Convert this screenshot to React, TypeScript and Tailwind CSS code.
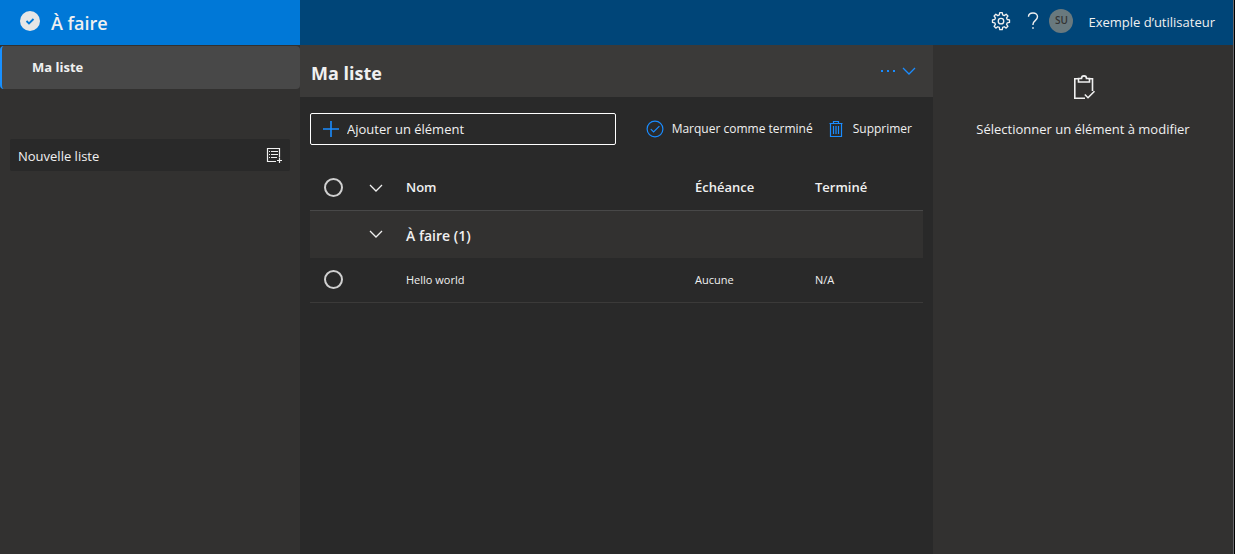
import type { ReactNode } from "react";

const tasks = [{ name: "Hello world", due: "Aucune", done: "N/A" }];

function Chevron({ className }: { className?: string }) {
  return (
    <svg viewBox="0 0 14 14" className={className} fill="none" stroke="currentColor" strokeWidth="1.3">
      <path d="M1 4l6 6 6-6" />
    </svg>
  );
}

function GearIcon() {
  return (
    <svg viewBox="0 0 24 24" className="size-5" fill="none" stroke="currentColor" strokeWidth="1.6" strokeLinejoin="round">
      <path d="M10.5 2h3l.5 2.7 1.9.8 2.3-1.6 2.1 2.100-1.600 2.300.8 1.900 2.700.5v3l-2.700.5-.8 1.900 1.600 2.300-2.100 2.100-2.300-1.600-1.900.8-.5 2.700h-3l-.5-2.700-1.900-.8-2.300 1.600-2.100-2.100 1.600-2.300-.8-1.900-2.700-.5v-3l2.700-.5.8-1.900L3.700 6l2.100-2.100 2.300 1.600 1.900-.8z" />
      <circle cx="12" cy="12.200" r="3.300" />
    </svg>
  );
}

function HelpIcon() {
  return (
    <svg viewBox="0 0 12 18" className="h-[18px] w-3" fill="none" stroke="currentColor" strokeWidth="1.4">
      <path d="M1.500 4.800C1.500 2.500 3.300 1 6 1s4.500 1.500 4.500 3.800c0 3.700-4.500 3.900-4.500 7.400v.8" />
      <path d="M6 15.200v1.600" strokeWidth="1.600" />
    </svg>
  );
}

function NewListIcon() {
  return (
    <svg viewBox="0 0 16 16" className="size-4" fill="none" stroke="currentColor" strokeWidth="1.2">
      <path d="M10 14.500H1.500v-13h12v9" />
      <path d="M3 4.500h1M3 7.500h1M3 10.500h1M5 4.500h7M5 7.500h7M5 10.500h6" strokeWidth="1" />
      <path d="M13.500 11v5M11 13.500h5" />
    </svg>
  );
}

function ClipboardIcon() {
  return (
    <svg viewBox="0 0 24 26" className="ml-0.5 h-[26px] w-6" fill="none" stroke="currentColor" strokeWidth="1.6">
      <path d="M13 24.200H2.800V4.800H7M16.500 4.800h4V17" />
      <path d="M6.500 8V4.500h3c0-3.500 5-3.500 5 0h3V8z" />
      <path d="M12.800 20.500l3.200 3.200 6.500-6.500" />
    </svg>
  );
}

function CheckIcon() {
  return (
    <svg viewBox="0 0 18 18" className="size-[18px]" fill="none" stroke="currentColor" strokeWidth="1.2">
      <circle cx="9" cy="9" r="7.900" />
      <path d="M4.800 9.200l2.800 2.800 5.800-5.800" />
    </svg>
  );
}

function TrashIcon() {
  return (
    <svg viewBox="0 0 18 18" className="size-[18px]" fill="none" stroke="currentColor" strokeWidth="1.2">
      <path d="M2.500 3.500h13M6.500 3.500v-2h5v2M3.500 3.500v13h11v-13" />
      <path d="M6.500 6v8M9 6v8M11.500 6v8" />
    </svg>
  );
}

function CommandButton({ icon, children }: { icon: ReactNode; children: ReactNode }) {
  return (
    <button className="flex items-center gap-2 whitespace-nowrap text-xs">
      <span className="text-[#1a8cff]">{icon}</span>
      {children}
    </button>
  );
}

function RoundCheckbox({ label }: { label: string }) {
  return (
    <input
      type="checkbox"
      aria-label={label}
      className="ml-3.5 block size-[19px] appearance-none rounded-full border-2 border-[#d0d0d0] checked:bg-[#1a8cff]"
    />
  );
}

export default function App() {
  return (
    <div className="min-h-screen bg-black pr-px font-['Open_Sans','Noto_Sans',sans-serif] text-[13px] text-[#f0f0f0]">
      <div className="flex min-h-screen flex-col border-r border-[#66666a] bg-[#292929]">
        <header className="flex h-[45px] bg-[#004578]">
          <div className="flex w-[300px] shrink-0 items-center gap-[11px] bg-[#0078d7] pb-1 pl-5">
            <svg viewBox="0 0 20 20" className="size-5">
              <circle cx="10" cy="10" r="10" fill="#e6e6e6" />
              <path d="M6.500 10l2.500 2.500 4.500-4.500" fill="none" stroke="#0078d7" strokeWidth="1.800" />
            </svg>
            <h1 className="pt-1 text-lg font-semibold">À faire</h1>
          </div>
          <div className="flex flex-1 items-center justify-end pr-[18px] pb-1">
            <button aria-label="Paramètres" className="mr-4">
              <GearIcon />
            </button>
            <button aria-label="Aide" className="mr-2.5">
              <HelpIcon />
            </button>
            <span className="mr-[15px] flex size-6 items-center justify-center rounded-full bg-[#69797e] text-[10px] font-semibold text-[#333]">
              SU
            </span>
            <span className="pt-1">Exemple d’utilisateur</span>
          </div>
        </header>

        <div className="flex flex-1">
          <nav className="w-[300px] shrink-0 bg-[#323130]">
            <a
              href="#"
              className="mt-px flex h-[43px] items-center rounded-sm border-l-2 border-[#1890ff] bg-[#484848] pl-[30px] font-bold"
            >
              Ma liste
            </a>
            <button className="mx-2.5 mt-[50px] flex h-8 w-[280px] items-center justify-between rounded-xs bg-[#292929] px-2">
              <span className="pt-1">Nouvelle liste</span>
              <NewListIcon />
            </button>
          </nav>

          <main className="min-w-0 flex-1">
            <div className="flex h-[52px] items-center justify-between bg-[#3b3a39] pr-[17px] pl-[11px]">
              <h2 className="pt-1 text-lg font-bold">Ma liste</h2>
              <div className="flex items-center gap-1.5 text-[#1a8cff]">
                <button aria-label="Plus d’options">
                  <svg viewBox="0 0 16 16" className="size-4" fill="currentColor">
                    <path d="M1 7h2v2H1zM7 7h2v2H7zM13 7h2v2h-2z" />
                  </svg>
                </button>
                <button aria-label="Développer">
                  <Chevron className="size-3.5" />
                </button>
              </div>
            </div>

            <div className="px-2.5 pt-4">
              <div className="flex items-center gap-3.5">
                <label className="mr-4 flex h-8 flex-1 items-center gap-2 rounded-xs border border-white pl-3">
                  <svg viewBox="0 0 16 16" className="size-4 shrink-0" stroke="#1a8cff" strokeWidth="1.6">
                    <path d="M0 8h16M8 0v16" />
                  </svg>
                  <input
                    type="text"
                    aria-label="Ajouter un élément"
                    placeholder="Ajouter un élément"
                    className="w-full min-w-0 bg-transparent pt-0.5 outline-none placeholder:text-[#f0f0f0]"
                  />
                </label>
                <CommandButton icon={<CheckIcon />}>Marquer comme terminé</CommandButton>
                <div className="pr-[11px]">
                  <CommandButton icon={<TrashIcon />}>Supprimer</CommandButton>
                </div>
              </div>

              <table className="mt-[21px] w-full table-fixed border-collapse text-left">
                <colgroup>
                  <col className="w-12" />
                  <col className="w-9" />
                  <col />
                  <col className="w-[120px]" />
                  <col className="w-[120px]" />
                </colgroup>
                <thead>
                  <tr className="h-11 border-b border-[#484848]">
                    <th>
                      <RoundCheckbox label="Tout sélectionner" />
                    </th>
                    <th>
                      <Chevron className="mx-auto size-3.5" />
                    </th>
                    <th className="px-3 font-semibold">Nom</th>
                    <th className="px-3 font-semibold">Échéance</th>
                    <th className="px-3 font-semibold">Terminé</th>
                  </tr>
                </thead>
                <tbody>
                  <tr className="h-12 bg-[#323130]">
                    <td />
                    <td>
                      <Chevron className="mx-auto size-3.5" />
                    </td>
                    <th colSpan={3} className="px-3 pt-1 text-sm font-semibold">
                      À faire (1)
                    </th>
                  </tr>
                  {tasks.map((task) => (
                    <tr key={task.name} className="h-11 border-b border-[#3b3a39] text-[11px]">
                      <td>
                        <RoundCheckbox label={task.name} />
                      </td>
                      <td />
                      <td className="px-3">{task.name}</td>
                      <td className="px-3">{task.due}</td>
                      <td className="px-3">{task.done}</td>
                    </tr>
                  ))}
                </tbody>
              </table>
            </div>
          </main>

          <aside className="flex w-[300px] shrink-0 flex-col items-center gap-5 bg-[#323130] pt-[29px]">
            <ClipboardIcon />
            <p>Sélectionner un élément à modifier</p>
          </aside>
        </div>
      </div>
    </div>
  );
}
